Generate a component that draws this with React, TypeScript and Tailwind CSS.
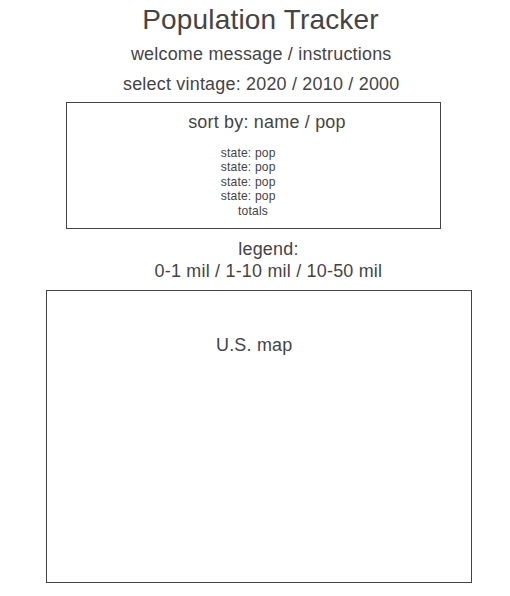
const states = ["state: pop", "state: pop", "state: pop", "state: pop"];

export default function App() {
  return (
    <main className="h-[596px] w-[510px] overflow-hidden bg-white text-center font-['Liberation_Sans',Arial,sans-serif] text-[18.7px] leading-[22px] tracking-[0.22px] text-[#444444]">
      <h1 className="pt-1 pl-[11px] text-[28px] leading-8 tracking-[0.17px]">Population Tracker</h1>
      <p className="mt-[7px] scale-x-96 pl-[13px]">welcome message / instructions</p>
      <p className="mt-2 scale-x-96 pl-[13px]">select vintage: 2020 / 2010 / 2000</p>
      <section className="mt-[7px] ml-[66px] h-[127px] w-[375px] border border-[#444444] pt-2">
        <h2 className="scale-x-96 pl-[28px]">sort by: name / pop</h2>
        <ul className="mt-[13px] scale-x-96 pr-[11px] text-[12.6px] leading-[14.4px] tracking-[0.17px]">
          {states.map((state, index) => (
            <li key={index}>{state}</li>
          ))}
          <li className="pl-[10px]">totals</li>
        </ul>
      </section>
      <div className="mt-[9px] scale-x-96 pl-[28px]">
        <p>legend:</p>
        <p>0-1 mil / 1-10 mil / 10-50 mil</p>
      </div>
      <section className="mt-2 ml-[46px] h-[293px] w-[426px] border border-[#444444] pt-[43px]">
        <h2 className="scale-x-96 pr-[10px]">U.S. map</h2>
      </section>
    </main>
  );
}
